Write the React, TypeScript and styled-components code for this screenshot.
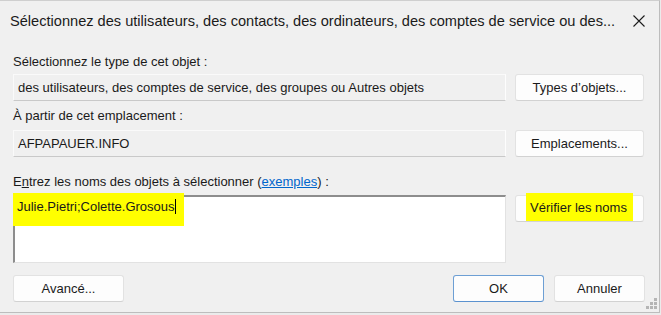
import React from 'react';
import styled, { createGlobalStyle } from 'styled-components';

const Global = createGlobalStyle`
  html, body { margin: 0; padding: 0; background: #ebebeb; }
  body { font-family: "Segoe UI", "Liberation Sans", Arial, sans-serif; }
`;

const Page = styled.div`
  width: 661px;
  height: 315px;
  overflow: hidden;
  background: #ebebeb;
`;

const Window = styled.div`
  position: relative;
  width: 660px;
  height: 313px;
  box-sizing: border-box;
  background: #f0f0f0;
  border-top: 1px solid #cfcfcf;
  border-right: 1px solid #bdbdbd;
  border-bottom: 1px solid #bdbdbd;
  display: flex;
  flex-direction: column;
`;

const TitleBar = styled.div`
  height: 41px;
  flex: none;
  display: flex;
  align-items: center;
  justify-content: space-between;
  padding: 0 13px 2px 10px;
  box-sizing: border-box;
  color: #1b1b1b;
  font-size: 14.6px;
`;

const Title = styled.span`
  white-space: nowrap;
`;

const Close = styled.svg`
  width: 14px;
  height: 14px;
  flex: none;
`;

const Content = styled.div`
  display: flex;
  flex-direction: column;
  padding: 0 14px 0 13px;
  font-size: 13px;
  color: #1a1a1a;
`;

const Label = styled.div<{ $mt: number; $mb: number }>`
  line-height: 16px;
  height: 16px;
  margin-top: ${p => p.$mt}px;
  margin-bottom: ${p => p.$mb}px;
  white-space: nowrap;
`;

const Row = styled.div`
  display: grid;
  grid-template-columns: 493px 129px;
  column-gap: 9px;
  align-items: start;
`;

const ReadOnlyField = styled.div`
  height: 27px;
  box-sizing: border-box;
  background: #f0f0f0;
  border: 1px solid #fafafa;
  border-bottom-color: #c9c9c9;
  border-right-color: #fdfdfd;
  padding-left: 4px;
  display: flex;
  align-items: center;
  white-space: nowrap;
`;

const Button = styled.button<{ $default?: boolean }>`
  height: 27px;
  box-sizing: border-box;
  background: #fdfdfd;
  border: 1px solid ${p => (p.$default ? '#6d9fd4' : '#e2e2e2')};
  border-bottom-color: ${p => (p.$default ? '#5b92cf' : '#d2d2d2')};
  border-radius: 3px;
  font-family: inherit;
  font-size: 13px;
  color: #1a1a1a;
  display: flex;
  align-items: center;
  justify-content: center;
  padding: 0;
`;

const NamesBox = styled.div`
  height: 68px;
  box-sizing: border-box;
  background: #ffffff;
  border-top: 2px solid #8d8d8d;
  border-left: 2px solid #8d8d8d;
  border-right: 1px solid #e2e2e2;
  border-bottom: 1px solid #e2e2e2;
  font-size: 13px;
  line-height: 16px;
`;

const Mark = styled.span<{ $pad: string; $m?: string }>`
  display: inline-block;
  background: #ffff00;
  padding: ${p => p.$pad};
  margin: ${p => p.$m ?? '0'};
`;

const Caret = styled.span`
  display: inline-block;
  width: 1px;
  height: 15px;
  background: #000;
  vertical-align: -3px;
`;

const Link = styled.span`
  color: #0066cc;
  text-decoration: underline;
`;

const Footer = styled.div`
  margin-top: 12px;
  display: flex;
  align-items: center;
`;

const Spacer = styled.div`
  flex: 1;
`;

const FooterButtons = styled.div`
  display: flex;
  gap: 10px;
`;

const WideButton = styled(Button)`
  width: 111px;
`;

const SmallButton = styled(Button)`
  width: 91px;
`;

const Grip = styled.svg`
  position: absolute;
  right: 2px;
  bottom: 2px;
  width: 12px;
  height: 12px;
`;

export default function App() {
  return (
    <Page>
      <Global />
      <Window>
        <TitleBar>
          <Title>Sélectionnez des utilisateurs, des contacts, des ordinateurs, des comptes de service ou des...</Title>
          <Close viewBox="0 0 14 14">
            <path d="M1.5 1.5 L12.5 12.5 M12.5 1.5 L1.5 12.5" stroke="#1b1b1b" strokeWidth="1.1" fill="none" />
          </Close>
        </TitleBar>
        <Content>
          <Label $mt={12} $mb={4}>Sélectionnez le type de cet objet :</Label>
          <Row>
            <ReadOnlyField>des utilisateurs, des comptes de service, des groupes ou Autres objets</ReadOnlyField>
            <Button>Types d’objets...</Button>
          </Row>
          <Label $mt={7} $mb={6}>À partir de cet emplacement :</Label>
          <Row>
            <ReadOnlyField>AFPAPAUER.INFO</ReadOnlyField>
            <Button>Emplacements...</Button>
          </Row>
          <Label $mt={17} $mb={5}>
            E<u>n</u>trez les noms des objets à sélectionner (<Link>exemples</Link>) :
          </Label>
          <Row>
            <NamesBox>
              <Mark $pad="6px 8px 11px 4px" $m="-4px 0 0 -2px">Julie.Pietri;Colette.Grosous<Caret /></Mark>
            </NamesBox>
            <Button>
              <Mark $pad="7px 6px 6px 4px" $m="-3px 0 0 0">Vérifier les noms</Mark>
            </Button>
          </Row>
          <Footer>
            <WideButton>Avancé...</WideButton>
            <Spacer />
            <FooterButtons>
              <SmallButton $default>OK</SmallButton>
              <SmallButton>Annuler</SmallButton>
            </FooterButtons>
          </Footer>
        </Content>
        <Grip viewBox="0 0 12 12">
          <g fill="#b5b5b5">
            <rect x="9" y="0" width="3" height="3" />
            <rect x="5" y="4" width="3" height="3" />
            <rect x="9" y="4" width="3" height="3" />
            <rect x="1" y="8" width="3" height="3" />
            <rect x="5" y="8" width="3" height="3" />
            <rect x="9" y="8" width="3" height="3" />
          </g>
        </Grip>
      </Window>
    </Page>
  );
}
